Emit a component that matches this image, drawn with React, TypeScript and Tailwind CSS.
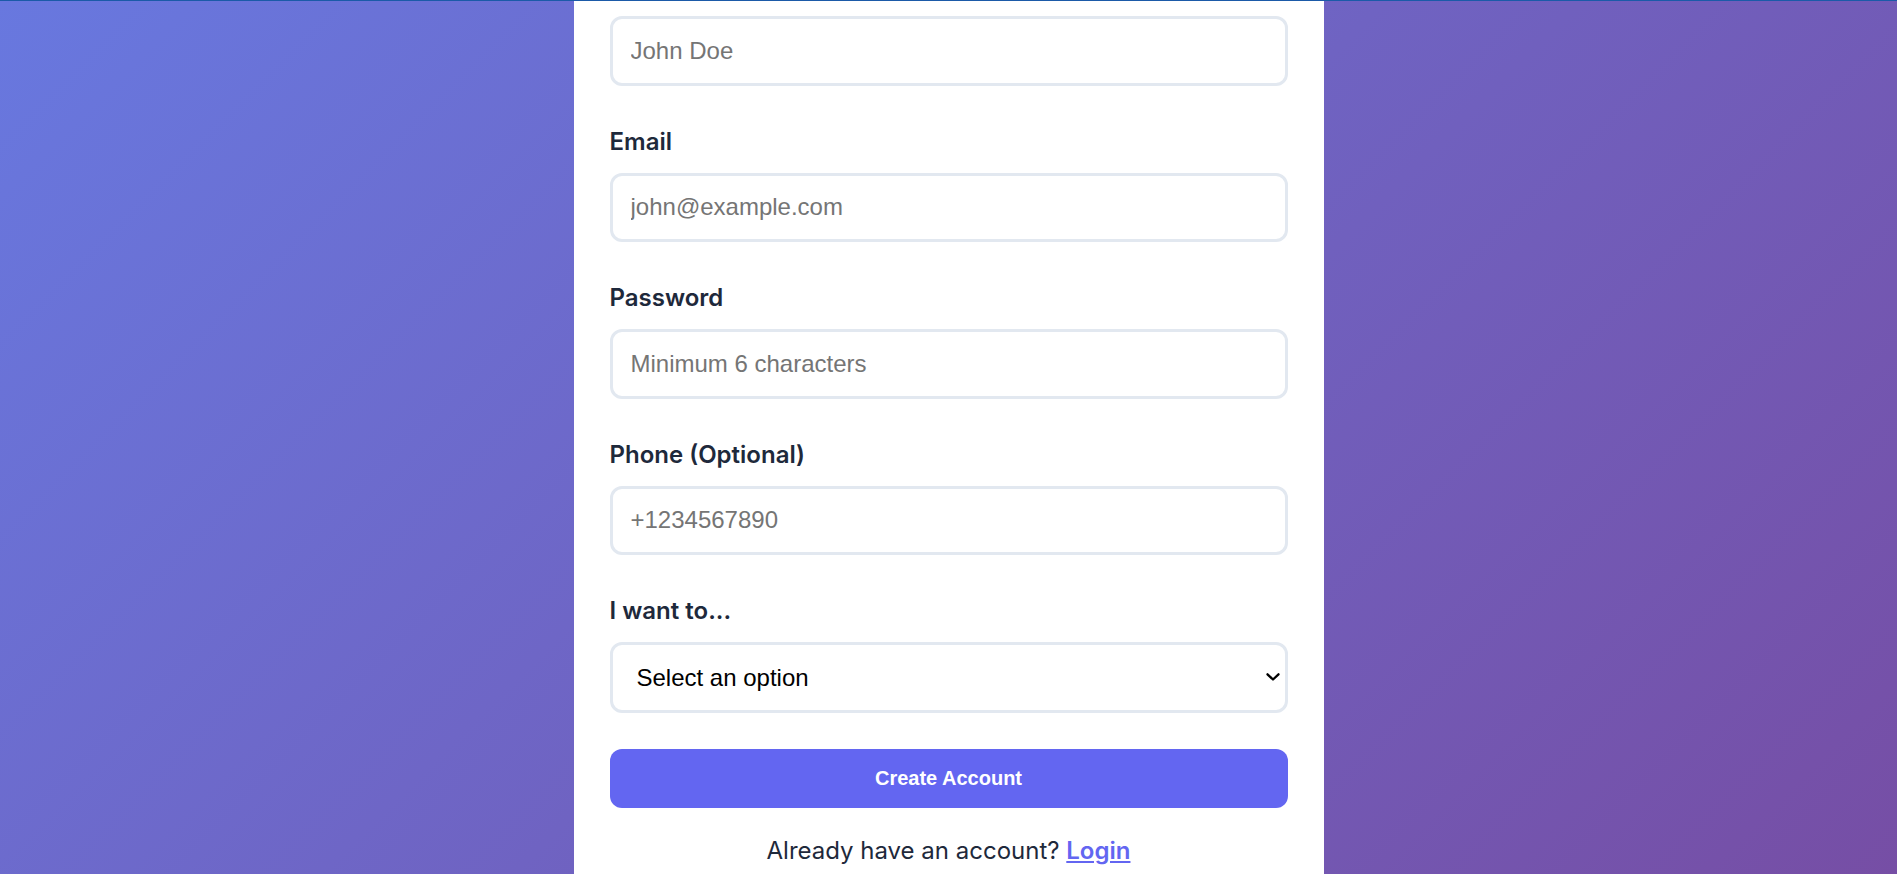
import { useState } from 'react'

const fields = [
  { label: 'Email', type: 'email', placeholder: 'john@example.com' },
  { label: 'Password', type: 'password', placeholder: 'Minimum 6 characters' },
  { label: 'Phone (Optional)', type: 'tel', placeholder: '+1234567890' },
]

const inputClass =
  "block w-full h-[69.5px] rounded-[12px] border-[3px] border-[#e2e8f0] bg-white px-[18px] font-['Liberation_Sans',Arial,sans-serif] text-[24px] text-[#1e293b] placeholder:text-[#757575] outline-none"

const labelClass = 'mb-[12px] block text-[24px] font-semibold leading-[39px] text-[#1e293b]'

export default function App() {
  const [role, setRole] = useState('')

  return (
    <div className="relative h-screen overflow-hidden bg-[linear-gradient(135deg,#6878df_0%,#764ea5_100%)] font-['Inter',sans-serif]">
      <div className="fixed inset-x-0 top-0 z-10 h-px bg-[#1b5aa8]" />
      <div className="flex justify-center">
        <div className="w-[750px] bg-white px-[36px] pt-[16px]">
          <div className="mb-[36px]">
            <input type="text" placeholder="John Doe" className={inputClass} />
          </div>

          {fields.map((field) => (
            <div key={field.label} className="mb-[36px]">
              <label className={labelClass}>{field.label}</label>
              <input type={field.type} placeholder={field.placeholder} className={inputClass} />
            </div>
          ))}

          <div className="mb-[36px]">
            <label className={labelClass}>I want to...</label>
            <div className="relative">
              <select
                value={role}
                onChange={(event) => setRole(event.target.value)}
                className="block h-[70.5px] w-full appearance-none rounded-[12px] border-[3px] border-[#e2e8f0] bg-white pl-[24px] pr-[40px] pt-[1px] font-['Liberation_Sans',Arial,sans-serif] text-[24px] text-black outline-none"
              >
                <option value="">Select an option</option>
                <option value="buy">Buy products</option>
                <option value="sell">Sell products</option>
              </select>
              <svg
                className="pointer-events-none absolute right-[8px] top-1/2 -translate-y-1/2"
                width="14"
                height="9"
                viewBox="0 0 14 9"
                fill="none"
              >
                <path d="M1.5 1.8 L7 7 L12.5 1.8" stroke="#000" strokeWidth="2.3" strokeLinecap="round" strokeLinejoin="round" />
              </svg>
            </div>
          </div>

          <button className="block h-[59px] w-full rounded-[12px] bg-[#6366f1] font-['Liberation_Sans',Arial,sans-serif] text-[20px] font-bold text-white">
            Create Account
          </button>

          <p className="mt-[25px] pb-[36px] text-center text-[24px] leading-[36px] text-[#1e293b]">
            Already have an account?{' '}
            <a href="#" className="font-semibold text-[#6366f1] underline">
              Login
            </a>
          </p>
        </div>
      </div>
    </div>
  )
}
